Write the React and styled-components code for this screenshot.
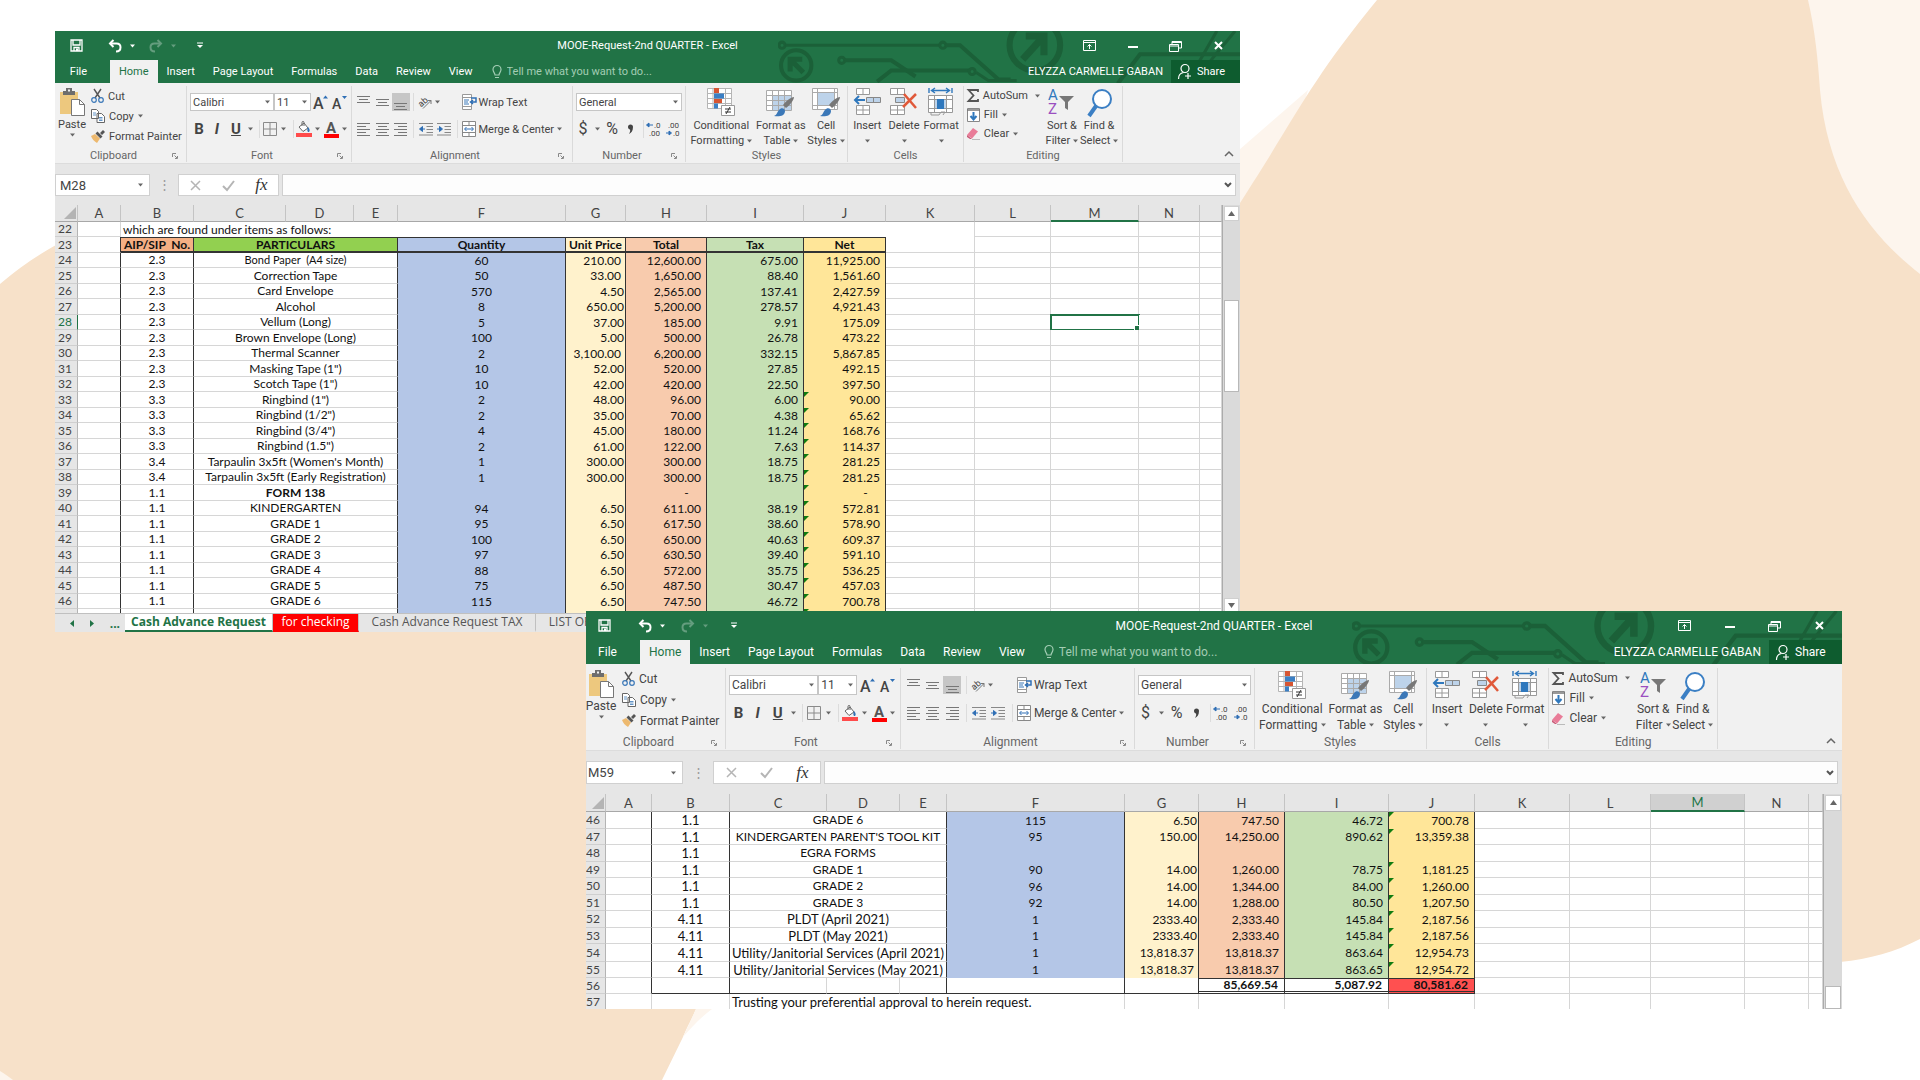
import React from 'react';
import styled, { createGlobalStyle, ThemeProvider, css } from 'styled-components';

const GlobalStyle = createGlobalStyle`
    * {
        box-sizing: border-box;
    }
    body {
        margin: 0;
        background: #fff;
    }
    button, input, select {
        margin: 0;
        padding: 0;
        border: 0;
        background: none;
        color: inherit;
        font: inherit;
        outline: none;
    }
`;

const small = { ui: 11, note: 12, title: 29, tabs: 23, ribbon: 81, line: 20, gap: 3, bigLine: 15, box: 18, bar: 22, barEnd: 9, head: 17, grow: 0, scroll: 18 };
const large = { ui: 12, note: 13, title: 29, tabs: 24, ribbon: 87, line: 21, gap: 4, bigLine: 16, box: 20, bar: 23, barEnd: 10, head: 18, grow: 1, scroll: 19 };

const INK = '#333';
const GRID = '#d6d6d6';

const Desktop = styled.main`
    position: relative;
    min-height: 100vh;
    overflow: hidden;
    font-family: Roboto, "Open Sans", sans-serif;
    color: #444;
`;

const Backdrop = styled.svg`
    position: absolute;
    width: 100%;
    height: 100%;
    top: 0;
    left: 0;
`;

const Window = styled.section`
    position: absolute;
    top: ${p => p.$top}px;
    left: ${p => p.$left}px;
    right: ${p => p.$right}px;
    background: #e6e6e6;
    font-size: ${p => p.theme.ui}px;
    overflow: hidden;
`;

const Green = styled.header`
    position: relative;
    background: #217346;
    color: #fff;
`;

const Circuit = styled.svg`
    position: absolute;
    right: 0;
    top: 0;
    width: 39%;
    height: 100%;
`;

const TitleBar = styled.div`
    position: relative;
    display: grid;
    grid-template-columns: 1fr auto 1fr;
    align-items: center;
    height: ${p => p.theme.title}px;
`;

const QuickAccess = styled.div`
    display: flex;
    align-items: center;
    padding-left: ${p => p.$pad}px;
`;

const QuickButton = styled.button`
    display: flex;
    align-items: center;
    justify-content: flex-start;
    gap: 8px;
    width: ${p => p.$w + p.theme.grow * 2}px;
    height: 20px;
    opacity: ${p => (p.disabled ? 0.3 : 1)};
`;

const WindowButtons = styled.div`
    display: flex;
    justify-content: flex-end;
`;

const WindowButton = styled.button`
    display: flex;
    align-items: center;
    justify-content: center;
    width: ${p => 43 + p.theme.grow * 2}px;
    height: 28px;
`;

const TabBar = styled.nav`
    position: relative;
    display: flex;
    height: ${p => p.theme.tabs}px;
`;

const Tab = styled.button`
    padding: 0 9px;
    white-space: nowrap;
    ${p => p.$active && css`
        background: #f1f1f1;
        color: #217346;
    `}
`;

const FileTab = styled(Tab)`
    width: ${p => 47 - p.theme.grow * 4}px;
    margin-right: ${p => 8 + p.theme.grow * 3}px;
`;

const TellMe = styled.label`
    display: flex;
    flex: 1;
    align-items: center;
    gap: 5px;
    margin-left: 10px;
    color: #a3cdb4;

    input {
        flex: 1;
        min-width: 0;
    }
    input::placeholder {
        color: #a3cdb4;
        opacity: 1;
    }
`;

const User = styled.span`
    align-self: center;
    padding-right: 8px;
`;

const Share = styled.button`
    display: flex;
    align-items: center;
    gap: 5px;
    width: ${p => 69 + p.theme.grow * 4}px;
    padding-left: 6px;
    background: #0e5c2f;
`;

const Ribbon = styled.div`
    display: grid;
    grid-template-columns: 132fr 165fr 221fr 113fr 162fr 116fr 159fr 117fr;
    height: ${p => p.theme.ribbon}px;
    background: #f1f1f1;
    border-bottom: 1px solid #dcdcdc;
`;

const Group = styled.div`
    display: flex;
    flex-direction: column;
    min-width: 0;
    border-right: 1px solid #dadada;
    margin: ${p => p.theme.gap}px 0 1px;
`;

const GroupBody = styled.div`
    display: flex;
    flex: 1;
    min-height: 0;
    flex-direction: ${p => (p.$column ? 'column' : 'row')};
    gap: ${p => (p.$column ? 6 : 0)}px;
    padding: ${p => (p.$column ? 7 : 0)}px ${p => (p.$column ? 3 : 0)}px 0;
`;

const GroupLabel = styled.div`
    display: flex;
    align-items: center;
    height: 13px;
    color: #666;
    line-height: 13px;

    span {
        flex: 1;
        text-align: center;
    }
    button {
        display: flex;
        width: 14px;
    }
`;

const Split = styled.div`
    display: grid;
    grid-template-columns: ${p => p.$cols.map(c => `minmax(0, ${c}fr)`).join(' ')};
    height: ${p => p.$h || p.theme.box}px;
    flex: none;
    align-items: center;
    justify-items: center;
    width: 100%;
`;

const BigSplit = styled(Split)`
    height: auto;
    align-items: start;
`;

const Tool = styled.button`
    display: flex;
    align-items: center;
    justify-content: ${p => (p.$start ? 'flex-start' : 'center')};
    justify-self: ${p => (p.$start ? 'start' : 'center')};
    height: 18px;
    gap: ${p => p.$gap || 0}px;
    white-space: nowrap;
    ${p => p.$on && css`
        width: 18px;
        background: #c6c6c6;
    `}
    ${p => p.$glyph && css`
        font-size: ${p.$glyph}px;
        line-height: 18px;
    `}
`;

const Divider = styled.i`
    width: 1px;
    height: 18px;
    background: #dcdcdc;
`;

const SelectBox = styled.label`
    display: flex;
    align-items: center;
    width: 100%;
    height: ${p => p.theme.box}px;
    padding: 0 3px 0 2px;
    background: #fff;
    border: 1px solid #c6c6c6;

    select {
        flex: 1;
        min-width: 0;
        appearance: none;
    }
`;

const PasteButton = styled.button`
    display: flex;
    flex-direction: column;
    align-items: center;
    width: 36px;
    padding: 2px ${p => 2 + p.theme.grow * 4}px 0 0;
    line-height: 17px;
`;

const ToolList = styled.div`
    display: flex;
    flex-direction: column;
    align-items: flex-start;
    min-width: 0;
`;

const ListButton = styled.button`
    display: flex;
    align-items: center;
    gap: 4px;
    height: ${p => p.theme.line - (p.$tight ? 1 : 0)}px;
    white-space: nowrap;
`;

const BigButton = styled.button`
    display: flex;
    flex-direction: column;
    align-items: center;
    padding-top: ${p => 2 + p.theme.grow}px;
    line-height: ${p => p.theme.bigLine}px;
    white-space: nowrap;

    span {
        display: flex;
        align-items: center;
        gap: 3px;
        min-height: ${p => p.theme.bigLine}px;
    }
`;

const BigIcon = styled.div`
    height: 30px;
`;

const Collapse = styled.button`
    align-self: end;
    justify-self: end;
    padding: 0 6px 3px;
`;

const FormulaBar = styled.div`
    display: flex;
    align-items: center;
    padding: 10px 4px ${p => p.theme.barEnd}px 0;
    font-size: 13px;
`;

const NameBox = styled.label`
    display: flex;
    align-items: center;
    width: ${p => 95 + p.theme.grow * 2}px;
    height: ${p => p.theme.bar}px;
    padding: 0 6px 0 ${p => 4 - p.theme.grow * 3}px;
    background: #fff;
    border: 1px solid #d0d0d0;

    input {
        flex: 1;
        min-width: 0;
    }
`;

const Dots = styled.div`
    width: ${p => 28 + p.theme.grow * 2}px;
    text-align: center;
    color: #999;
    line-height: 20px;
`;

const FxBox = styled.div`
    display: grid;
    grid-template-columns: repeat(3, 1fr);
    align-items: center;
    justify-items: center;
    width: ${p => 101 + p.theme.grow * 7}px;
    height: ${p => p.theme.bar}px;
    margin-right: 3px;
    background: #fff;
    border: 1px solid #d0d0d0;
`;

const FxLabel = styled.button`
    font: italic 17px/18px "Liberation Serif", serif;
    color: #333;
`;

const FormulaInput = styled.label`
    display: flex;
    flex: 1;
    align-items: center;
    height: ${p => p.theme.bar}px;
    padding-right: 3px;
    background: #fdfdfd;
    border: 1px solid #d0d0d0;

    input {
        flex: 1;
    }
`;

const SheetArea = styled.div`
    display: flex;
    max-height: ${p => p.$max}px;
    overflow: hidden;
`;

const Sheet = styled.table`
    flex: 1;
    width: 100%;
    table-layout: fixed;
    border-collapse: separate;
    border-spacing: 0;
    background: #fff;
    color: #111;
    font-family: Lato, "Open Sans", sans-serif;
    font-size: 12px;
    line-height: 12px;
`;

const Column = styled.col`
    width: ${p => (p.$w ? `${p.$w}px` : 'auto')};
`;

const ColumnHead = styled.th`
    height: ${p => p.theme.head}px;
    padding: 0;
    background: ${p => (p.$selected === 'fill' ? '#d0d0d0' : '#e6e6e6')};
    color: ${p => (p.$selected === 'fill' ? '#217346' : '#444')};
    border-right: 1px solid #c4c4c4;
    border-bottom: ${p => (p.$selected ? '2px solid #217346' : '1px solid #a8a8a8')};
    font-size: 13px;
    font-weight: normal;
    vertical-align: middle;
`;

const Corner = styled.th`
    padding: 0 1px 2px 0;
    background: #e6e6e6;
    border-bottom: 1px solid #a8a8a8;
    border-right: 1px solid #c4c4c4;
    vertical-align: bottom;

    svg {
        display: block;
        margin-left: auto;
    }
`;

const RowHead = styled.th`
    height: ${p => p.$h}px;
    padding: 0 0 0 ${p => (p.theme.grow ? 0 : 3)}px;
    background: #e6e6e6;
    border-right: 1px solid ${p => (p.$selected ? '#217346' : '#b4b4b4')};
    border-bottom: 1px solid #cfcfcf;
    color: ${p => (p.$selected ? '#217346' : '#444')};
    font-weight: normal;
    text-align: left;
`;

const Cell = styled.td`
    position: relative;
    padding: 0 ${p => p.$pad || 0}px 0 ${p => p.$left || 0}px;
    background: ${p => p.$bg || '#fff'};
    border-right: 1px solid ${p => p.$r || GRID};
    border-bottom: ${p => p.$b || `1px solid ${GRID}`};
    border-top: ${p => p.$t || 0};
    font-size: ${p => (p.$note ? p.theme.note : p.$fine ? 11 : 12)}px;
    font-weight: ${p => (p.$bold ? 'bold' : 'normal')};
    text-align: ${p => p.$align || 'center'};
    white-space: pre;

    ${p => p.$flag && css`
        &::before {
            content: '';
            position: absolute;
            top: 0;
            left: 0;
            border-top: 5px solid #107c10;
            border-right: 5px solid transparent;
        }
    `}
    ${p => p.$selected && css`
        outline: 2px solid #217346;
        outline-offset: -1px;

        &::after {
            content: '';
            position: absolute;
            right: -2px;
            bottom: -2px;
            width: 5px;
            height: 5px;
            background: #217346;
            border: 1px solid #fff;
            border-width: 1px 0 0 1px;
        }
    `}
`;

const ScrollBar = styled.div`
    display: flex;
    flex-direction: column;
    flex: none;
    width: ${p => p.theme.scroll}px;
    padding: 1px 1px 0;
    background: #dadada;
    border-left: 1px solid #ababab;
`;

const ScrollButton = styled.button`
    display: flex;
    align-items: center;
    justify-content: center;
    height: ${p => p.theme.head - 2}px;
    background: #fff;
    border: 1px solid #cfcfcf;
`;

const ScrollGap = styled.div`
    height: ${p => p.$h}px;
`;

const Thumb = styled.div`
    height: ${p => p.$h}px;
    background: #fff;
    border: 1px solid #b8b8b8;
`;

const SheetTabs = styled.nav`
    display: flex;
    height: 19px;
    font-family: "Open Sans", sans-serif;
    font-size: 12px;
    color: #555;
    border-top: 1px solid #c0c0c0;
`;

const SheetNav = styled.div`
    display: flex;
    align-items: center;
    justify-content: space-between;
    width: 70px;
    padding: 0 5px 0 15px;
    color: #217346;
    font-weight: bold;
`;

const SheetTab = styled.button`
    width: ${p => p.$w}px;
    line-height: 16px;
    white-space: nowrap;
    border-right: 1px solid #c0c0c0;
    border-bottom: 2px solid transparent;
    ${p => p.$kind === 'active' && css`
        background: #fff;
        color: #217346;
        font-weight: bold;
        border-bottom-color: #217346;
    `}
    ${p => p.$kind === 'red' && css`
        background: #f00;
        color: #fff;
    `}
`;

/* ---------- icons ---------- */

const Svg = ({ w = 16, h = 16, children }) => (
    <svg width={w} height={h} viewBox={`0 0 ${w} ${h}`} fill="none" overflow="visible" aria-hidden="true">{children}</svg>
);

const Arrow = ({ color = '#666' }) => (
    <Svg w={5} h={4}><path d="M0 .5h5L2.500 3.500z" fill={color} /></Svg>
);

const SaveIcon = () => (
    <Svg w={13} h={13}><path d="M1 1h11v11H1z M3 1v5h7V1 M4 12V8.500h5V12" stroke="#fff" strokeWidth="1.300" /><path d="M6 9.500h2V12H6z" fill="#fff" /></Svg>
);

const UndoIcon = ({ flip }) => (
    <Svg w={14} h={14}>
        <g transform={flip ? 'translate(14 0) scale(-1 1)' : undefined} stroke="#fff" strokeWidth="2">
            <path d="M2 4.500h6.500c2.500 0 4 1.500 4 3.800S11 12.500 8 12.500" /><path d="M5.500 1L2 4.500 5.500 8" />
        </g>
    </Svg>
);

const PasteIcon = () => (
    <Svg w={27} h={28}>
        <path d="M1 4h18v22H1z" fill="#edc87e" /><path d="M4 7V3h3V0h6v3h3v4z" fill="#6d6d6d" /><path d="M9 1.500h2v2H9z" fill="#f1f1f1" />
        <path d="M12.500 11.500h8l5 5v11h-13z" fill="#fff" stroke="#777" /><path d="M20.500 11.500v5h5" stroke="#777" />
    </Svg>
);

const CutIcon = () => (
    <Svg w={13} h={14}>
        <path d="M3 0l6 9M10 0L4 9" stroke="#555" strokeWidth="1.400" />
        <circle cx="3" cy="11" r="2.300" stroke="#3b78b8" strokeWidth="1.200" /><circle cx="10" cy="11" r="2.300" stroke="#3b78b8" strokeWidth="1.200" />
    </Svg>
);

const CopyIcon = () => (
    <Svg w={14} h={14}>
        <path d="M.5.500h5l2 2v7h-7z M6 4.500h4.500l3 3v6H6z" fill="#fff" stroke="#666" />
        <path d="M2 4h3M2 6h3M8 8.500h3.500M8 10h3.500M8 11.500h3.500" stroke="#3b78b8" strokeWidth=".8" />
    </Svg>
);

const BrushIcon = () => (
    <Svg w={14} h={13}>
        <path d="M0 6l4-2 5 4.500-3 4.500C3 11 1 9 0 6z" fill="#edb96f" /><path d="M4.500 3.500l2-2 5 5-2 2z M9 3l3-3 2 2-3 3z" fill="#555" />
    </Svg>
);

const AlignIcon = ({ top = 0, kind }) => {
    const short = { left: [0, 9], center: [2, 11], right: [4, 13] };
    const s = short[kind] || [2, 11];
    const lines = kind ? [[0, 13], s, [0, 13], s, [0, 13]] : [[0, 13], s, [0, 13]];
    return (
        <Svg w={13} h={15}>
            {lines.map((l, i) => <path key={i} d={`M${l[0]} ${top + i * 3 + 1.5}H${l[1]}`} stroke="#777" />)}
        </Svg>
    );
};

const IndentIcon = ({ inward }) => (
    <Svg w={14} h={14}>
        <path d="M0 1.500h14M7.500 4.500H14M7.500 7.500H14M7.500 10.500H14M0 13h14" stroke="#888" />
        <path d={inward ? 'M0 7h4M2.500 4.500L5.500 7 2.500 9.500z' : 'M2 7h4M3.500 4.500L.5 7l3 2.500z'} fill="#2f6fb5" stroke="#2f6fb5" />
    </Svg>
);

const OrientIcon = () => (
    <Svg w={14} h={14}>
        <text x="-1" y="10" transform="rotate(-40 4 7)" fontSize="9" fill="#444" fontFamily="Roboto">ab</text>
        <path d="M4 13.500l8-8M8.500 5.500H12V9" stroke="#777" />
    </Svg>
);

const WrapIcon = () => (
    <Svg w={15} h={16}>
        <path d="M.5.500h9v15h-9z" fill="#fff" stroke="#999" /><path d="M.5 3.500h9M.5 12.500h9" stroke="#999" />
        <path d="M2 6h5M2 8h4M2 10h5" stroke="#3b78b8" /><path d="M9 4h5v4H9M11 6L8.500 8 11 10" stroke="#2f6fb5" strokeWidth="1.500" />
    </Svg>
);

const MergeIcon = () => (
    <Svg w={14} h={16}>
        <path d="M.5.500h13v15H.5z" fill="#fff" stroke="#888" /><path d="M.5 4.500h13M.5 11.500h13M7 0v4M7 12v4" stroke="#888" />
        <path d="M3 8h8M4.500 6L2.500 8l2 2M9.500 6l2 2-2 2" stroke="#2f6fb5" />
    </Svg>
);

const BordersIcon = () => (
    <Svg w={14} h={14}><path d="M.5.500h13v13H.5zM7 0v14M0 7h14" stroke="#8a8a8a" /></Svg>
);

const FillColorIcon = () => (
    <Svg w={16} h={16}>
        <path d="M3 6l5-4 4 5-5 3.500z" fill="#fff" stroke="#666" /><path d="M6 5V1.500C6 0 8 0 8 1.500V5" stroke="#666" />
        <path d="M12 6c2 2 2 4 1 5-2 0-2-2-1-5z" fill="#2f6fb5" /><path d="M0 12h16v4H0z" fill="#ff4b4b" />
    </Svg>
);

const FontColorIcon = () => (
    <Svg w={15} h={17}>
        <text x="2" y="12" fontSize="15" fontWeight="bold" fill="#555" fontFamily="Roboto">A</text><path d="M0 13h15v4H0z" fill="#f00" />
    </Svg>
);

const SizeIcon = ({ down }) => (
    <Svg w={16} h={17}>
        <text x="0" y="15" fontSize={down ? 14 : 16} fill="#444" fontFamily="Roboto" fontWeight="500">A</text>
        <path d={down ? 'M10 2h5l-2.500 3z' : 'M10 4.500h5L12.500 1.500z'} fill="#2f6fb5" />
    </Svg>
);

const DecimalIcon = ({ less }) => (
    <Svg w={16} h={16}>
        <text x={less ? 3 : 8} y="7" fontSize="8" fill="#444" fontFamily="Roboto">{less ? '.00' : '.0'}</text>
        <text x={less ? 8 : 3} y="15" fontSize="8" fill="#444" fontFamily="Roboto">{less ? '.0' : '.00'}</text>
        <path d={less ? 'M1 12h3M4 10l2.500 2L4 14z' : 'M3 4h4M3 2L.5 4 3 6z'} stroke="#2f6fb5" fill="#2f6fb5" />
    </Svg>
);

const LauncherIcon = () => (
    <Svg w={6} h={6}><path d="M.5 4V.5H4M2.500 2.500L5 5M5.500 3v2.500H3" stroke="#888" /></Svg>
);

const CondIcon = () => (
    <Svg w={28} h={28}>
        <path d="M.5.500h24v20H.5zM.5 5.500h24M.5 10.500h24M.5 15.500h24M6 0v20M18.500 0v20" fill="#fff" stroke="#b5b5b5" />
        <path d="M7 0h5v5H7zM7 11h8v4H7z" fill="#d65532" /><path d="M7 5.500h10v5H7zM7 15.500h4v5H7z" fill="#3b7fc4" />
        <path d="M14.500 17.500h13v10h-13z" fill="#fff" stroke="#999" /><path d="M18 21h6M18 24h6M23 19l-4 7" stroke="#333" />
    </Svg>
);

const Brush = () => (
    <g><path d="M28 9c0 3-4 8-8 11l-3-3c3-4 8-8 11-8z" fill="#777" /><path d="M8 28c3-1 3-4 5-6 2-3 6-2 6 1 0 5-6 6-11 5z" fill="#3b78b8" /></g>
);

const TableIcon = () => (
    <Svg w={29} h={29}>
        <path d="M.5 2.500h25v20H.5z" fill="#fff" stroke="#aaa" /><path d="M7 8h18v14H7z" fill="#bdd3ea" />
        <path d="M.5 7.500h25M.5 12.500h25M.5 17.500h25M6.500 2v20M12.500 2v20M18.500 2v20" stroke="#aaa" /><Brush />
    </Svg>
);

const StylesIcon = () => (
    <Svg w={29} h={29}>
        <path d="M.5.500h25v21H.5z" fill="#fff" stroke="#aaa" /><path d="M.5 4.500h25M.5 17.500h25M5.500 0v21M22.500 0v21" stroke="#aaa" />
        <path d="M6 5h16v12H6z" fill="#bdd3ea" /><Brush />
    </Svg>
);

const InsertIcon = () => (
    <Svg w={27} h={28}>
        <path d="M2.500.500h13v6h-13zM9 0v6M2.500 17.500h13v9h-13zM2.500 22h13M9 17v9" fill="#fff" stroke="#999" />
        <path d="M12.500 9.500h14v5h-14zM19.500 9v5" fill="#bdd3ea" stroke="#888" /><path d="M1 12h10M5 8l-4 4 4 4" stroke="#2f78bd" strokeWidth="2" />
    </Svg>
);

const DeleteIcon = () => (
    <Svg w={28} h={28}>
        <path d="M.5.500h14v6H.5zM7.500 0v6M.5 17.500h14v9H.5zM.5 22h14M7.500 17v9" fill="#fff" stroke="#999" />
        <path d="M5.500 9.500h9v5h-9z" fill="#bdd3ea" stroke="#888" /><path d="M14 6l12 14M26 6L13 19" stroke="#e0593a" strokeWidth="2.500" />
    </Svg>
);

const FormatIcon = () => (
    <Svg w={26} h={28}>
        <path d="M1 0v5M24 0v5M4 2.500h17M7 0L3.500 2.500 7 5M18 0l3.500 2.500L18 5" stroke="#2f78bd" strokeWidth="1.400" />
        <path d="M.5 7.500h24v17H.5zM.5 11.500h24M.5 20.500h24M6.500 7v17M18.500 7v17" fill="#fff" stroke="#999" /><path d="M7 12h11v8H7z" fill="#bdd3ea" />
        <path d="M9 11h7v10H9z" fill="#2f78bd" /><path d="M3 24v3h8l2-3h4l-2 3" stroke="#999" />
    </Svg>
);

const SortIcon = () => (
    <Svg w={27} h={28}>
        <text x="0" y="12" fontSize="15" fill="#2f78bd" fontFamily="Roboto">A</text><text x="0" y="26" fontSize="15" fill="#9b4fc0" fontFamily="Roboto">Z</text>
        <path d="M11 8h15l-6 6v8l-3-2v-6z" fill="#777" />
    </Svg>
);

const FindIcon = () => (
    <Svg w={25} h={28}>
        <path d="M2 28l7-10" stroke="#3b7fc4" strokeWidth="4" /><circle cx="15" cy="11" r="9" fill="#fff" stroke="#3b7fc4" strokeWidth="2" />
    </Svg>
);

const SumIcon = () => <Svg w={12} h={13}><path d="M11 3V1H1.500l5 5.500-5 5.500H11v-2" stroke="#555" strokeWidth="1.800" /></Svg>;
const FillIcon = () => (
    <Svg w={13} h={14}><path d="M.5.500h12v13H.5z" fill="#fff" stroke="#888" /><path d="M0 2h13" stroke="#777" strokeWidth="1.500" /><path d="M6.500 4v6M3.500 8l3 3.500 3-3.500" stroke="#2f78bd" strokeWidth="2" /></Svg>
);
const EraserIcon = () => (
    <Svg w={13} h={13}><path d="M0 8l6-7 5 3.500-6 7z" fill="#e97c98" /><path d="M0 8l5 4H3L0 10z" fill="#c85774" /><path d="M5 12.500h8" stroke="#bbb" /></Svg>
);

const ShareIcon = () => (
    <Svg w={15} h={17}><circle cx="8" cy="5.500" r="4" stroke="#fff" strokeWidth="1.200" /><path d="M1.500 16c0-4 2-6 5-6.500M8 13h6M11 10v6" stroke="#fff" strokeWidth="1.200" /></Svg>
);

const BulbIcon = () => (
    <Svg w={10} h={14}><path d="M3 10C3 8 1 7 1 4.500a4 4 0 018 0C9 7 7 8 7 10zM3 12.500h4" stroke="#a3cdb4" strokeWidth="1.200" /></Svg>
);

const CircuitArt = () => (
    <Circuit viewBox="0 0 457 52" preserveAspectRatio="xMaxYMin slice" fill="none" stroke="#1b6038" strokeWidth="3" aria-hidden="true">
        <circle cx="4" cy="14" r="3" /><path d="M7 14h153" /><circle cx="163" cy="14" r="3" /><path d="M166 14h14l38 34h12" strokeWidth="4" />
        <circle cx="18" cy="34" r="15" strokeWidth="4" /><path d="M25 41L12 28M12 40V28h12" strokeWidth="5" />
        <circle cx="63" cy="29" r="3" /><path d="M66 29h46l24 16" strokeWidth="4" />
        <path d="M98 50l14-11h77" strokeWidth="4" /><circle cx="192" cy="40" r="3" /><path d="M196 41l12 8h28" />
        <circle cx="254" cy="14" r="25" strokeWidth="6" /><path d="M242 28l20-22M245 5h18v19" strokeWidth="7" />
        <path d="M336 52l22-29h99" strokeWidth="4" /><path d="M404 52l30-52M424 34L452 0" />
    </Circuit>
);

/* ---------- window chrome ---------- */

const TABS = ['Insert', 'Page Layout', 'Formulas', 'Data', 'Review', 'View'];

const Header = ({ savePad }) => (
    <Green>
        <CircuitArt />
        <TitleBar>
            <QuickAccess $pad={savePad}>
                <QuickButton $w={38} aria-label="Save"><SaveIcon /></QuickButton>
                <QuickButton $w={41} aria-label="Undo"><UndoIcon /><Arrow color="#fff" /></QuickButton>
                <QuickButton $w={48} aria-label="Redo" disabled><UndoIcon flip /><Arrow color="#fff" /></QuickButton>
                <QuickButton $w={10} aria-label="Customize"><Svg w={6} h={7}><path d="M0 1h6" stroke="#fff" /><path d="M0 3h6L3 6z" fill="#fff" /></Svg></QuickButton>
            </QuickAccess>
            <span>MOOE-Request-2nd QUARTER - Excel</span>
            <WindowButtons>
                <WindowButton aria-label="Ribbon display"><Svg w={13} h={11}><path d="M.5.500h12v10H.5zM.5 2.500h12M6.500 9V4.500M4.500 6.500l2-2 2 2" stroke="#fff" /></Svg></WindowButton>
                <WindowButton aria-label="Minimize"><Svg w={10} h={11}><path d="M0 7h10" stroke="#fff" strokeWidth="2" /></Svg></WindowButton>
                <WindowButton aria-label="Restore"><Svg w={13} h={12}><path d="M.5 4.500h9v7h-9zM.5 6h9M3 4V1.500h9.500V8H10M3 2.500h9" stroke="#fff" /></Svg></WindowButton>
                <WindowButton aria-label="Close"><Svg w={9} h={9}><path d="M1 1l7 7M8 1L1 8" stroke="#fff" strokeWidth="2" /></Svg></WindowButton>
            </WindowButtons>
        </TitleBar>
        <TabBar>
            <FileTab>File</FileTab>
            <Tab $active>Home</Tab>
            {TABS.map(t => <Tab key={t}>{t}</Tab>)}
            <TellMe><BulbIcon /><input aria-label="Tell me" placeholder="Tell me what you want to do..." /></TellMe>
            <User>ELYZZA CARMELLE GABAN</User>
            <Share><ShareIcon />Share</Share>
        </TabBar>
    </Green>
);

const Label = ({ children, launcher }) => (
    <GroupLabel><span>{children}</span>{launcher && <button aria-label={`${children} settings`}><LauncherIcon /></button>}</GroupLabel>
);

const Big = ({ icon, top, bottom }) => (
    <BigButton><BigIcon>{icon}</BigIcon><span>{top}</span><span>{bottom}<Arrow /></span></BigButton>
);

const Choice = ({ label, value }) => (
    <SelectBox><select aria-label={label} defaultValue={value}><option>{value}</option></select><Arrow /></SelectBox>
);

const ALIGN_COLS = [18, 19, 18, 8, 17, 18, 9, 108];

const RibbonBar = () => (
    <Ribbon>
        <Group>
            <GroupBody>
                <PasteButton><PasteIcon />Paste<Arrow /></PasteButton>
                <ToolList>
                    <ListButton><CutIcon />Cut</ListButton>
                    <ListButton><CopyIcon />Copy <Arrow /></ListButton>
                    <ListButton><BrushIcon />Format Painter</ListButton>
                </ToolList>
            </GroupBody>
            <Label launcher>Clipboard</Label>
        </Group>
        <Group>
            <GroupBody $column>
                <Split $cols={[84, 37, 20, 17]}>
                    <Choice label="Font" value="Calibri" />
                    <Choice label="Font size" value="11" />
                    <Tool aria-label="Grow font"><SizeIcon /></Tool>
                    <Tool aria-label="Shrink font"><SizeIcon down /></Tool>
                </Split>
                <Split $h={24} $cols={[18, 18, 20, 9, 8, 14, 13, 6, 16, 11, 17, 8]}>
                    <Tool $glyph={15}><b>B</b></Tool>
                    <Tool $glyph={15}><b><em>I</em></b></Tool>
                    <Tool $glyph={15}><u><b>U</b></u></Tool>
                    <Arrow />
                    <Divider />
                    <Tool aria-label="Borders"><BordersIcon /></Tool>
                    <Arrow />
                    <Divider />
                    <Tool aria-label="Fill color"><FillColorIcon /></Tool>
                    <Arrow />
                    <Tool aria-label="Font color"><FontColorIcon /></Tool>
                    <Arrow />
                </Split>
            </GroupBody>
            <Label launcher>Font</Label>
        </Group>
        <Group>
            <GroupBody $column>
                <Split $cols={ALIGN_COLS}>
                    <Tool aria-label="Top align"><AlignIcon /></Tool>
                    <Tool aria-label="Middle align"><AlignIcon top={3} /></Tool>
                    <Tool $on aria-label="Bottom align"><AlignIcon top={7} /></Tool>
                    <Divider />
                    <Tool aria-label="Orientation"><OrientIcon /></Tool>
                    <Tool $start aria-label="Orientation menu"><Arrow /></Tool>
                    <i />
                    <Tool $start $gap={2}><WrapIcon />Wrap Text</Tool>
                </Split>
                <Split $h={24} $cols={ALIGN_COLS}>
                    <Tool aria-label="Align left"><AlignIcon kind="left" /></Tool>
                    <Tool aria-label="Center"><AlignIcon kind="center" /></Tool>
                    <Tool aria-label="Align right"><AlignIcon kind="right" /></Tool>
                    <Divider />
                    <Tool aria-label="Decrease indent"><IndentIcon /></Tool>
                    <Tool aria-label="Increase indent"><IndentIcon inward /></Tool>
                    <Divider />
                    <Tool $start $gap={3}><MergeIcon />Merge &amp; Center <Arrow /></Tool>
                </Split>
            </GroupBody>
            <Label launcher>Alignment</Label>
        </Group>
        <Group>
            <GroupBody $column>
                <Split $cols={[1]}>
                    <Choice label="Number format" value="General" />
                </Split>
                <Split $h={24} $cols={[14, 16, 13, 24, 3, 18, 19]}>
                    <Tool $glyph={16}>$</Tool>
                    <Arrow />
                    <Tool $glyph={16}>%</Tool>
                    <Tool aria-label="Comma style"><Svg w={6} h={10}><path d="M1 3a2.500 2.500 0 115 0c0 4-2 6-4 7 1-2 1.500-3 1-4.500C2 5.500 1 4.500 1 3z" fill="#444" /></Svg></Tool>
                    <Divider />
                    <Tool aria-label="Increase decimal"><DecimalIcon /></Tool>
                    <Tool aria-label="Decrease decimal"><DecimalIcon less /></Tool>
                </Split>
            </GroupBody>
            <Label launcher>Number</Label>
        </Group>
        <Group>
            <GroupBody>
                <BigSplit $cols={[71, 49, 42]}>
                    <Big icon={<CondIcon />} top="Conditional" bottom="Formatting" />
                    <Big icon={<TableIcon />} top="Format as" bottom="Table" />
                    <Big icon={<StylesIcon />} top="Cell" bottom="Styles" />
                </BigSplit>
            </GroupBody>
            <Label>Styles</Label>
        </Group>
        <Group>
            <GroupBody>
                <BigSplit $cols={[39, 35, 40, 2]}>
                    <Big icon={<InsertIcon />} top="Insert" />
                    <Big icon={<DeleteIcon />} top="Delete" />
                    <Big icon={<FormatIcon />} top="Format" />
                </BigSplit>
            </GroupBody>
            <Label>Cells</Label>
        </Group>
        <Group>
            <GroupBody>
                <BigSplit $cols={[79, 39, 36, 5]}>
                    <ToolList>
                        <ListButton $tight><SumIcon />AutoSum&nbsp; <Arrow /></ListButton>
                        <ListButton $tight><FillIcon />Fill<Arrow /></ListButton>
                        <ListButton $tight><EraserIcon />Clear<Arrow /></ListButton>
                    </ToolList>
                    <Big icon={<SortIcon />} top="Sort &" bottom="Filter" />
                    <Big icon={<FindIcon />} top="Find &" bottom="Select" />
                </BigSplit>
            </GroupBody>
            <Label>Editing</Label>
        </Group>
        <Collapse aria-label="Collapse ribbon"><Svg w={10} h={7}><path d="M1 6l4-4 4 4" stroke="#666" strokeWidth="1.500" /></Svg></Collapse>
    </Ribbon>
);

const Formula = ({ cell }) => (
    <FormulaBar>
        <NameBox><input aria-label="Name box" defaultValue={cell} /><Arrow /></NameBox>
        <Dots>⋮</Dots>
        <FxBox>
            <Svg w={11} h={11}><path d="M1 1l9 9M10 1l-9 9" stroke="#b5b5b5" strokeWidth="1.500" /></Svg>
            <Svg w={13} h={11}><path d="M1 6l4 4 7-9" stroke="#b5b5b5" strokeWidth="2" /></Svg>
            <FxLabel>fx</FxLabel>
        </FxBox>
        <FormulaInput>
            <input aria-label="Formula" />
            <Svg w={8} h={6}><path d="M1 1l3 3 3-3" stroke="#555" strokeWidth="2" /></Svg>
        </FormulaInput>
    </FormulaBar>
);

/* ---------- sheet ---------- */

const LETTERS = ['A', 'B', 'C', 'D', 'E', 'F', 'G', 'H', 'I', 'J', 'K', 'L', 'M', 'N', ''];
const FILL = { F: '#b4c6e7', G: '#fff2cc', H: '#f8cbad', I: '#c6e0b4', J: '#ffe699' };

// row, B, C:E, F, G, H, I, J
const FIRST = [
    [24, '2.3', 'Bond Paper  (A4 size)', '60', '210.00 ', '12,600.00', '675.00', '11,925.00'],
    [25, '2.3', 'Correction Tape', '50', '33.00 ', '1,650.00', '88.40', '1,561.60'],
    [26, '2.3', 'Card Envelope', '570', '4.50', '2,565.00', '137.41', '2,427.59'],
    [27, '2.3', 'Alcohol', '8', '650.00', '5,200.00', '278.57', '4,921.43'],
    [28, '2.3', 'Vellum (Long)', '5', '37.00', '185.00', '9.91', '175.09'],
    [29, '2.3', 'Brown Envelope (Long)', '100', '5.00', '500.00', '26.78', '473.22'],
    [30, '2.3', 'Thermal Scanner', '2', '3,100.00 ', '6,200.00', '332.15', '5,867.85'],
    [31, '2.3', 'Masking Tape (1")', '10', '52.00', '520.00', '27.85', '492.15'],
    [32, '2.3', 'Scotch Tape (1")', '10', '42.00', '420.00', '22.50', '397.50'],
    [33, '3.3', 'Ringbind (1")', '2', '48.00', '96.00', '6.00', '90.00'],
    [34, '3.3', 'Ringbind (1/2")', '2', '35.00', '70.00', '4.38', '65.62'],
    [35, '3.3', 'Ringbind (3/4")', '4', '45.00', '180.00', '11.24', '168.76'],
    [36, '3.3', 'Ringbind (1.5")', '2', '61.00', '122.00', '7.63', '114.37'],
    [37, '3.4', "Tarpaulin 3x5ft (Women's Month)", '1', '300.00', '300.00', '18.75', '281.25'],
    [38, '3.4', 'Tarpaulin 3x5ft (Early Registration)', '1', '300.00', '300.00', '18.75', '281.25'],
    [39, '1.1', 'FORM 138', '', '', '-    ', '', '-    '],
    [40, '1.1', 'KINDERGARTEN', '94', '6.50', '611.00', '38.19', '572.81'],
    [41, '1.1', 'GRADE 1', '95', '6.50', '617.50', '38.60', '578.90'],
    [42, '1.1', 'GRADE 2', '100', '6.50', '650.00', '40.63', '609.37'],
    [43, '1.1', 'GRADE 3', '97', '6.50', '630.50', '39.40', '591.10'],
    [44, '1.1', 'GRADE 4', '88', '6.50', '572.00', '35.75', '536.25'],
    [45, '1.1', 'GRADE 5', '75', '6.50', '487.50', '30.47', '457.03'],
    [46, '1.1', 'GRADE 6', '115', '6.50', '747.50', '46.72', '700.78'],
    [47, '1.1', "KINDERGARTEN PARENT'S TOOL KIT", '95', '150.00', '14,250.00', '890.62', '13,359.38'],
];

const SECOND = [
    [46, '1.1', 'GRADE 6', '115', '6.50', '747.50', '46.72', '700.78'],
    [47, '1.1', "KINDERGARTEN PARENT'S TOOL KIT", '95', '150.00', '14,250.00', '890.62', '13,359.38'],
    [48, '1.1', 'EGRA FORMS', '', '', '', '', ''],
    [49, '1.1', 'GRADE 1', '90', '14.00', '1,260.00', '78.75', '1,181.25'],
    [50, '1.1', 'GRADE 2', '96', '14.00', '1,344.00', '84.00', '1,260.00'],
    [51, '1.1', 'GRADE 3', '92', '14.00', '1,288.00', '80.50', '1,207.50'],
    [52, '4.11', 'PLDT (April 2021)', '1', '2333.40', '2,333.40', '145.84', '2,187.56'],
    [53, '4.11', 'PLDT (May 2021)', '1', '2333.40', '2,333.40', '145.84', '2,187.56'],
    [54, '4.11', 'Utility/Janitorial Services (April 2021)', '1', '13,818.37 ', '13,818.37', '863.64', '12,954.73'],
    [55, '4.11', 'Utility/Janitorial Services (May 2021)', '1', '13,818.37 ', '13,818.37', '863.65', '12,954.72'],
];

const Blank = ({ n, selected }) => Array.from({ length: n }, (_, i) => (
    <Cell key={i} $selected={selected && i === n - 3} />
));

const DataRow = ({ row, h, selected }) => {
    const [no, b, item, qty, ...money] = row;
    return (
        <tr>
            <RowHead scope="row" $h={h} $selected={selected}>{no}</RowHead>
            <Cell $r={INK} />
            <Cell $r={INK} $note>{b}</Cell>
            <Cell
                colSpan={3}
                $r={INK}
                $bold={item === 'FORM 138'}
                $fine={no === 24}
                $note={no !== 24 && /[a-z]/.test(item)}
            >
                {item}
            </Cell>
            <Cell $r={INK} $b="0" $bg={FILL.F}>{qty}</Cell>
            {money.map((m, i) => (
                <Cell
                    key={i}
                    $align="right"
                    $pad={i === 0 ? 1 : 5}
                    $r={INK}
                    $b="0"
                    $bg={FILL['GHIJ'[i]]}
                    $flag={i === 3 && no > 32 && no !== 48}
                >
                    {m}
                </Cell>
            ))}
            <Blank n={5} selected={selected} />
        </tr>
    );
};

const SheetTable = ({ widths, selected, children }) => (
    <Sheet>
        <colgroup>{widths.map((w, i) => <Column key={i} $w={w} />)}</colgroup>
        <thead>
            <tr>
                <Corner aria-label="Select all"><Svg w={12} h={12}><path d="M12 0v12H0z" fill="#b4b4b4" /></Svg></Corner>
                {LETTERS.map(l => <ColumnHead key={l} scope="col" $selected={l === 'M' && selected}>{l}</ColumnHead>)}
            </tr>
        </thead>
        <tbody>{children}</tbody>
    </Sheet>
);

const HEADINGS = [
    ['AIP/SIP  No.', '#f4b084', 1], ['PARTICULARS', '#92d050', 3], ['Quantity', FILL.F, 1], ['Unit Price', FILL.G, 1],
    ['Total', FILL.H, 1], ['Tax', FILL.I, 1], ['Net', FILL.J, 1],
];

const UpArrow = () => <Svg w={7} h={5}><path d="M0 5h7L3.500 0z" fill="#666" /></Svg>;
const DownArrow = () => <Svg w={7} h={5}><path d="M0 0h7L3.500 5z" fill="#666" /></Svg>;

const FirstWindow = () => (
    <ThemeProvider theme={small}>
        <Window $top={31} $left={55} $right={680}>
            <Header savePad={15} />
            <RibbonBar />
            <Formula cell="M28" />
            <SheetArea $max={408}>
                <SheetTable widths={[23, 43, 73, 92, 68, 44, 168, 60, 81, 97, 82, 89, 76, 88, 61, 0]} selected="line">
                    <tr>
                        <RowHead scope="row" $h={15}>22</RowHead>
                        <Cell />
                        <Cell colSpan={10} $align="left" $left={2} $b="0">which are found under items as follows:</Cell>
                        <Blank n={4} />
                    </tr>
                    <tr>
                        <RowHead scope="row" $h={16}>23</RowHead>
                        <Cell $r={INK} />
                        {HEADINGS.map(([text, bg, span]) => (
                            <Cell key={text} colSpan={span} $bold $bg={bg} $r={INK} $t={`1px solid ${INK}`} $b={`2px solid ${INK}`}>{text}</Cell>
                        ))}
                        <Blank n={5} />
                    </tr>
                    {FIRST.map((row, i) => <DataRow key={row[0]} row={row} h={15 + (i % 2)} selected={row[0] === 28} />)}
                </SheetTable>
                <ScrollBar>
                    <ScrollButton aria-label="Scroll up"><UpArrow /></ScrollButton>
                    <ScrollGap $h={79} />
                    <Thumb $h={93} />
                    <ScrollGap $h={207} />
                    <ScrollButton aria-label="Scroll down"><DownArrow /></ScrollButton>
                </ScrollBar>
            </SheetArea>
            <SheetTabs>
                <SheetNav>
                    <Svg w={4} h={7}><path d="M4 0v7L0 3.500z" fill="#217346" /></Svg>
                    <Svg w={4} h={7}><path d="M0 0v7l4-3.500z" fill="#217346" /></Svg>
                    <span>...</span>
                </SheetNav>
                <SheetTab $w={148} $kind="active">Cash Advance Request</SheetTab>
                <SheetTab $w={86} $kind="red">for checking</SheetTab>
                <SheetTab $w={177}>Cash Advance Request TAX</SheetTab>
                <SheetTab $w={68}>LIST OF</SheetTab>
            </SheetTabs>
        </Window>
    </ThemeProvider>
);

const SECOND_HEIGHTS = [17, 16, 17, 16, 17, 16, 17, 16, 18, 16];

const SecondWindow = () => {
    const line = `1px solid ${INK}`;
    const total = { $bold: true, $align: 'right', $pad: 6, $r: INK, $t: line, $b: `3px double ${INK}` };
    return (
        <ThemeProvider theme={large}>
            <Window $top={611} $left={586} $right={78}>
                <Header savePad={12} />
                <RibbonBar />
                <Formula cell="M59" />
                <SheetArea $max={215}>
                    <SheetTable widths={[20, 46, 78, 97, 73, 47, 178, 74, 86, 104, 86, 95, 81, 94, 64, 0]} selected="fill">
                        {SECOND.map((row, i) => <DataRow key={row[0]} row={row} h={SECOND_HEIGHTS[i]} />)}
                        <tr>
                            <RowHead scope="row" $h={16}>56</RowHead>
                            <Cell $r={INK} />
                            <Cell $r={INK} $b={line} />
                            <Cell $b={line} />
                            <Cell $b={line} />
                            <Cell $r={INK} $b={line} />
                            <Cell $r={INK} $b={line} />
                            <Cell $r={INK} $b={line} />
                            <Cell {...total}>85,669.54</Cell>
                            <Cell {...total}>5,087.92</Cell>
                            <Cell {...total} $bg="#ff5050">80,581.62</Cell>
                            <Blank n={5} />
                        </tr>
                        <tr>
                            <RowHead scope="row" $h={16}>57</RowHead>
                            <Cell />
                            <Cell />
                            <Cell colSpan={4} $align="left" $left={2} $note>Trusting your preferential approval to herein request.</Cell>
                            <Blank n={9} />
                        </tr>
                    </SheetTable>
                    <ScrollBar>
                        <ScrollButton aria-label="Scroll up"><UpArrow /></ScrollButton>
                        <ScrollGap $h={179} />
                        <Thumb $h={24} />
                    </ScrollBar>
                </SheetArea>
            </Window>
        </ThemeProvider>
    );
};

const App = () => (
    <Desktop>
        <GlobalStyle />
        <Backdrop viewBox="0 0 1920 1080" preserveAspectRatio="none" aria-hidden="true">
            <path d="M1308 90L1200 184v80h60z" fill="#fdf5ed" />
            <path d="M1377 0C1310 82 1300 110 1240 203L1000 700l840 262c30-3 55-10 80-23V0z" fill="#f7e1c9" />
            <path d="M1808 0c7 30 10 60 12 90 8 90 50 145 100 184V0z" fill="#fdf5ed" />
            <path d="M0 284C20 267 35 257 56 245L700 500v500l-4 9c-4 10-9 18-13 28l-21 43H0z" fill="#f7e1c9" />
            <path d="M696 1009h16c-12 9-20 18-29 28z M0 1071c5 3 9 6 13 9H0z" fill="#fdf5ed" />
        </Backdrop>
        <FirstWindow />
        <SecondWindow />
    </Desktop>
);

export default App;
